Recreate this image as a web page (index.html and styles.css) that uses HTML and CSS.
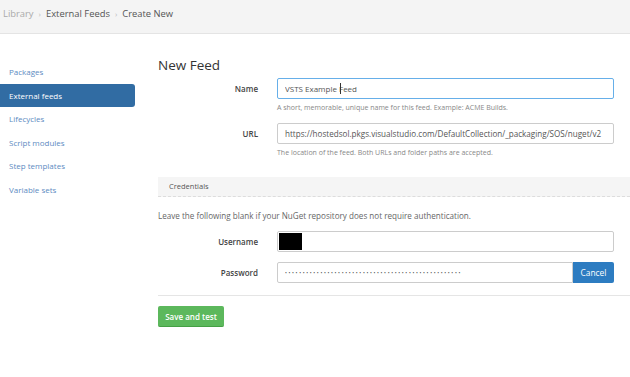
FILE: index.html
```html
<!DOCTYPE html>
<html lang="en">
<head>
    <meta charset="UTF-8">
    <meta name="viewport" content="width=device-width, initial-scale=1.0">
    <title>Create New Feed</title>
    <link rel="stylesheet" href="styles.css">
</head>
<body>
    <div class="topbar">
        <span class="crumb muted">Library</span>
        <span class="sep">›</span>
        <span class="crumb">External Feeds</span>
        <span class="sep">›</span>
        <span class="crumb">Create New</span>
    </div>

    <div class="layout">
        <nav class="sidebar">
            <a href="#">Packages</a>
            <a href="#" class="active">External feeds</a>
            <a href="#">Lifecycles</a>
            <a href="#">Script modules</a>
            <a href="#">Step templates</a>
            <a href="#">Variable sets</a>
        </nav>

        <div class="main">
            <h2>New Feed</h2>
            <form id="feedForm">
                <div class="field-row">
                    <label for="name">Name</label>
                    <div class="control">
                        <input type="text" id="name" class="focus" value="VSTS Example Feed">
                        <span class="caret"></span>
                    </div>
                    <div class="help">A short, memorable, unique name for this feed. Example: ACME Builds.</div>
                </div>
                <div class="field-row">
                    <label for="url">URL</label>
                    <div class="control">
                        <input type="text" id="url" value="https://hostedsol.pkgs.visualstudio.com/DefaultCollection/_packaging/SOS/nuget/v2">
                    </div>
                    <div class="help">The location of the feed. Both URLs and folder paths are accepted.</div>
                </div>

                <div class="panel-heading">Credentials</div>
                <p class="note">Leave the following blank if your NuGet repository does not require authentication.</p>

                <div class="field-row">
                    <label for="username">Username</label>
                    <div class="control">
                        <input type="text" id="username" value="">
                        <span class="redacted"></span>
                    </div>
                </div>
                <div class="field-row">
                    <label for="password">Password</label>
                    <div class="control input-group">
                        <input type="password" id="password" value="xxxxxxxxxxxxxxxxxxxxxxxxxxxxxxxxxxxxxxxxxxxxxxxxxx">
                        <button type="button" class="btn-cancel">Cancel</button>
                    </div>
                </div>

                <hr>
                <button type="submit" class="btn-save">Save and test</button>
            </form>
        </div>
    </div>
</body>
</html>
```

FILE: styles.css
```css
body {
    font-family: "Open Sans", "Noto Sans", sans-serif;
    margin: 0;
    padding: 0;
    color: #333;
    background-color: #fff;
}
.topbar {
    height: 34px;
    box-sizing: border-box;
    background-color: #f4f4f4;
    border-bottom: 1px solid #e4e4e4;
    display: flex;
    align-items: center;
    gap: 5px;
    padding: 0 0 6px 3px;
    font-size: 9.4px;
    color: #555;
}
.topbar .muted {
    color: #aaa;
}
.topbar .sep {
    color: #bbb;
    font-size: 8px;
}
.layout {
    display: flex;
}
.sidebar {
    width: 135px;
    flex-shrink: 0;
    padding-top: 26px;
}
.sidebar a {
    display: block;
    height: 23.5px;
    line-height: 23.5px;
    padding-left: 9px;
    font-size: 8px;
    color: #5d8bc2;
    text-decoration: none;
    border-radius: 0 3px 3px 0;
}
.sidebar a.active {
    background-color: #316ca3;
    color: #fff;
}
.main {
    flex: 1;
    margin-left: 23px;
}
h2 {
    font-size: 13.5px;
    font-weight: normal;
    line-height: 16px;
    margin: 23px 0 5px;
    color: #333;
}
.field-row {
    display: grid;
    grid-template-columns: 100px 337px;
    column-gap: 19px;
    margin-bottom: 10px;
}
.field-row label {
    font-weight: 600;
    font-size: 8px;
    line-height: 21px;
    text-align: right;
    color: #444;
}
.control {
    position: relative;
    display: flex;
}
.control input {
    flex: 1;
    min-width: 0;
    height: 21px;
    box-sizing: border-box;
    border: 1px solid #ccc;
    border-radius: 2px;
    padding: 0 7px;
    font-family: inherit;
    font-size: 8px;
    color: #555;
    outline: none;
}
#url {
    font-size: 8.1px;
}
.control input.focus {
    border-color: #66afe9;
}
.control input[type="password"] {
    font-size: 5px;
    letter-spacing: 1.66px;
}
.caret {
    position: absolute;
    left: 62.5px;
    top: 5px;
    width: 1px;
    height: 11px;
    background-color: #333;
}
.redacted {
    position: absolute;
    left: 2px;
    top: 2px;
    width: 23px;
    height: 17px;
    background-color: #000;
}
.input-group input {
    border-radius: 2px 0 0 2px;
}
.btn-cancel {
    width: 41px;
    height: 21px;
    border: none;
    border-radius: 0 2px 2px 0;
    background-color: #2d7cc1;
    color: #fff;
    font-family: inherit;
    font-size: 8.4px;
    padding: 0;
    cursor: pointer;
}
.help {
    grid-column: 2;
    font-size: 7px;
    line-height: 10px;
    margin-top: 4px;
    color: #888;
}
.panel-heading {
    margin-top: 19px;
    height: 20px;
    box-sizing: border-box;
    line-height: 19px;
    padding-left: 11px;
    background-color: #f5f5f5;
    border-bottom: 1px dashed #ddd;
    font-size: 7.5px;
    color: #555;
}
.note {
    margin: 13px 0 9px;
    font-size: 8.1px;
    line-height: 12px;
    color: #666;
}
hr {
    border: 0;
    border-top: 1px solid #e5e5e5;
    margin: 12px 0 10px;
}
.btn-save {
    display: block;
    width: 66px;
    height: 21px;
    border: none;
    border-bottom: 1px solid #45a045;
    border-radius: 2px;
    background-color: #5cb85c;
    color: #fff;
    font-family: inherit;
    font-size: 8px;
    font-weight: 600;
    padding: 0;
    cursor: pointer;
}
```
